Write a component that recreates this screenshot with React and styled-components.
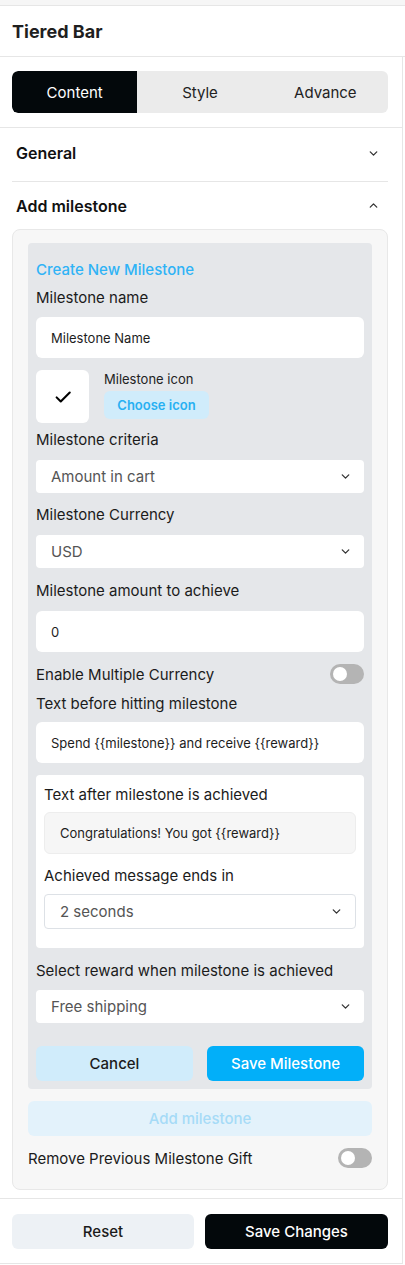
import React from "react";
import styled, { createGlobalStyle } from "styled-components";

const Global = createGlobalStyle`
  html, body { margin: 0; padding: 0; background: #fff; }
  body { font-family: Inter, "Noto Sans", Arial, sans-serif; color: #1b1b1b; -webkit-font-smoothing: antialiased; }
  * { box-sizing: border-box; }
`;

const TopStrip = styled.div`
  height: 6px;
  background: #f6f6f6;
  border-bottom: 1px solid #e6e6e6;
`;

const Header = styled.div`
  height: 51px;
  display: flex;
  align-items: center;
  padding-left: 12px;
  font-size: 18px;
  font-weight: 700;
  color: #1f1f1f;
  border-bottom: 1px solid #e6e6e6;
`;

const Body = styled.div`
  width: 403px;
  border-right: 1px solid #e6e6e6;
  border-bottom: 1px solid #e6e6e6;
`;

const TabsWrap = styled.div`
  padding: 14px 14px 14px 12px;
  border-bottom: 1px solid #e6e6e6;
`;

const Tabs = styled.div`
  display: grid;
  grid-template-columns: repeat(3, 1fr);
  height: 42px;
  background: #ebebeb;
  border-radius: 6px;
  overflow: hidden;
`;

const Tab = styled.div`
  display: flex;
  align-items: center;
  justify-content: center;
  font-size: 15px;
  color: ${(p) => (p.$active ? "#fff" : "#222")};
  background: ${(p) => (p.$active ? "#03080b" : "transparent")};
  border-radius: ${(p) => (p.$active ? "6px 0 0 6px" : "0")};
`;

const Section = styled.div`
  margin: 0 14px 0 12px;
  border-bottom: ${(p) => (p.$line ? "1px solid #e6e6e6" : "none")};
`;

const SectionHead = styled.div`
  height: ${(p) => p.$h}px;
  display: flex;
  align-items: center;
  justify-content: space-between;
  padding: 0 8px ${(p) => p.$pb ?? 0}px 4px;
  font-size: 16px;
  font-weight: 600;
  color: #111;
`;

const Panel = styled.div`
  background: #f7f7f7;
  border: 1px solid #e8e8e8;
  border-radius: 8px;
  padding: 13px 15px 21px;
`;

const Inner = styled.div`
  background: #e5e7ea;
  border-radius: 4px;
  padding: 17px 8px 8px;
  display: flex;
  flex-direction: column;
`;

const Title = styled.div`
  font-size: 15px;
  line-height: 20px;
  font-weight: 500;
  color: #2fb3f6;
  margin-bottom: 8px;
`;

const Label = styled.div`
  font-size: 15px;
  line-height: 20px;
  font-weight: 400;
  color: #1b1b1b;
  margin-top: ${(p) => p.$mt ?? 0}px;
  margin-bottom: ${(p) => p.$mb ?? 10}px;
`;

const TextBox = styled.div`
  height: ${(p) => p.$h ?? 41}px;
  background: ${(p) => p.$bg ?? "#fff"};
  border: ${(p) => (p.$border ? `1px solid ${p.$border}` : "none")};
  border-radius: 6px;
  display: flex;
  align-items: center;
  padding-left: 15px;
  font-size: 13px;
  color: #1d1d1d;
`;

const Select = styled.div`
  height: ${(p) => p.$h ?? 33}px;
  background: #fff;
  border: ${(p) => (p.$border ? `1px solid ${p.$border}` : "none")};
  border-radius: 4px;
  display: flex;
  align-items: center;
  justify-content: space-between;
  padding: 0 12px 0 15px;
  font-size: 15px;
  color: #555;
`;

const IconRow = styled.div`
  display: flex;
  gap: 15px;
  margin-top: 12px;
`;

const IconBox = styled.div`
  width: 53px;
  height: 53px;
  background: #fff;
  border-radius: 6px;
  display: flex;
  align-items: center;
  justify-content: center;
`;

const IconInfo = styled.div`
  display: flex;
  flex-direction: column;
  padding-top: 1px;
`;

const SmallLabel = styled.div`
  font-size: 13px;
  line-height: 16px;
  color: #222;
  margin-bottom: 4px;
`;

const ChooseBtn = styled.div`
  width: 105px;
  height: 28px;
  border-radius: 6px;
  background: #d0ecfb;
  color: #28b0f2;
  font-size: 13px;
  font-weight: 600;
  display: flex;
  align-items: center;
  justify-content: center;
`;

const ToggleRow = styled.div`
  display: flex;
  align-items: center;
  justify-content: space-between;
  height: 20px;
  font-size: 15px;
  font-weight: 400;
  color: #1b1b1b;
  margin-top: ${(p) => p.$mt ?? 0}px;
  margin-bottom: ${(p) => p.$mb ?? 0}px;
`;

const Toggle = styled.div`
  width: 34px;
  height: 20px;
  border-radius: 10px;
  background: #b4b4b4;
  position: relative;
  &::after {
    content: "";
    position: absolute;
    left: 3px;
    top: 3px;
    width: 14px;
    height: 14px;
    border-radius: 50%;
    background: #fff;
  }
`;

const Card = styled.div`
  background: #fff;
  border-radius: 4px;
  padding: 10px 8px 19px;
  margin-top: 12px;
  display: flex;
  flex-direction: column;
`;

const ButtonRow = styled.div`
  display: grid;
  grid-template-columns: 1fr 1fr;
  gap: 14px;
  margin-top: 23px;
`;

const Btn = styled.div`
  height: ${(p) => p.$h ?? 35}px;
  border-radius: 6px;
  background: ${(p) => p.$bg};
  color: ${(p) => p.$color};
  font-size: 15px;
  font-weight: 500;
  display: flex;
  align-items: center;
  justify-content: center;
`;

const AddBtn = styled(Btn)`
  margin-top: 12px;
`;

const Footer = styled.div`
  border-top: 1px solid #e6e6e6;
  margin-top: 8px;
  padding: 15px 14px 14px 12px;
  display: grid;
  grid-template-columns: 182px 183px;
  justify-content: space-between;
`;

const Chevron = ({ up, size = 13, color = "#333" }) => (
  <svg width={size} height={size} viewBox="0 0 24 24" fill="none" stroke={color} strokeWidth="2.4" strokeLinecap="round" strokeLinejoin="round">
    <path d={up ? "M6 15l6-6 6 6" : "M6 9l6 6 6-6"} />
  </svg>
);

const Check = () => (
  <svg width="18" height="18" viewBox="0 0 24 24" fill="none" stroke="#000" strokeWidth="2.8" strokeLinecap="round" strokeLinejoin="round">
    <path d="M3.5 12.5l5.5 5.5L21 6" />
  </svg>
);

export default function App() {
  return (
    <>
      <Global />
      <TopStrip />
      <Header>Tiered Bar</Header>
      <Body>
        <TabsWrap>
          <Tabs>
            <Tab $active>Content</Tab>
            <Tab>Style</Tab>
            <Tab>Advance</Tab>
          </Tabs>
        </TabsWrap>
        <Section $line>
          <SectionHead $h={53} $pb={3}>
            General
            <Chevron />
          </SectionHead>
        </Section>
        <Section>
          <SectionHead $h={47}>
            Add milestone
            <Chevron up />
          </SectionHead>
          <Panel>
            <Inner>
              <Title>Create New Milestone</Title>
              <Label $mb={9}>Milestone name</Label>
              <TextBox>Milestone Name</TextBox>
              <IconRow>
                <IconBox>
                  <Check />
                </IconBox>
                <IconInfo>
                  <SmallLabel>Milestone icon</SmallLabel>
                  <ChooseBtn>Choose icon</ChooseBtn>
                </IconInfo>
              </IconRow>
              <Label $mt={7}>Milestone criteria</Label>
              <Select>
                Amount in cart
                <Chevron />
              </Select>
              <Label $mt={12}>Milestone Currency</Label>
              <Select>
                USD
                <Chevron />
              </Select>
              <Label $mt={13}>Milestone amount to achieve</Label>
              <TextBox>0</TextBox>
              <ToggleRow $mt={12}>
                Enable Multiple Currency
                <Toggle />
              </ToggleRow>
              <Label $mt={10} $mb={8}>Text before hitting milestone</Label>
              <TextBox>{"Spend {{milestone}} and receive {{reward}}"}</TextBox>
              <Card>
                <Label $mb={7}>Text after milestone is achieved</Label>
                <TextBox $h={42} $bg="#f6f6f6" $border="#ededed">
                  {"Congratulations! You got {{reward}}"}
                </TextBox>
                <Label $mt={12} $mb={8}>Achieved message ends in</Label>
                <Select $h={35} $border="#dde1e6">
                  2 seconds
                  <Chevron />
                </Select>
              </Card>
              <Label $mt={13} $mb={9}>Select reward when milestone is achieved</Label>
              <Select>
                Free shipping
                <Chevron />
              </Select>
              <ButtonRow>
                <Btn $bg="#d0ecfb" $color="#1b1b1b">Cancel</Btn>
                <Btn $bg="#02aff9" $color="#fff">Save Milestone</Btn>
              </ButtonRow>
            </Inner>
            <AddBtn $bg="#e3f2fb" $color="#a6dbf7">Add milestone</AddBtn>
            <ToggleRow $mt={12}>
              Remove Previous Milestone Gift
              <Toggle />
            </ToggleRow>
          </Panel>
        </Section>
        <Footer>
          <Btn $bg="#edf1f5" $color="#1b1b1b">Reset</Btn>
          <Btn $bg="#03080b" $color="#fff">Save Changes</Btn>
        </Footer>
      </Body>
    </>
  );
}
